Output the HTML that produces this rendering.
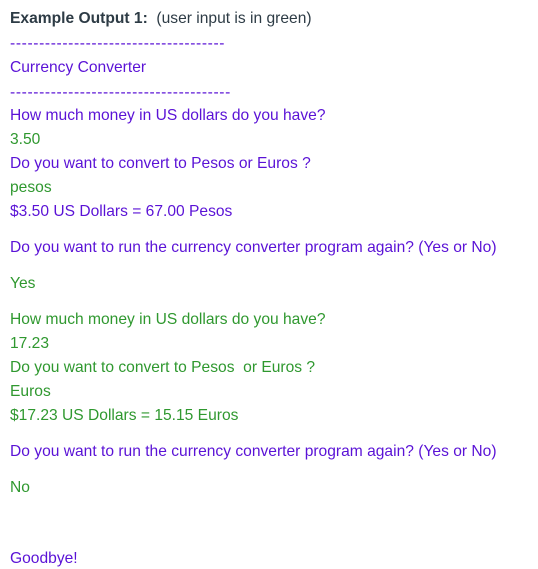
<!DOCTYPE html>
<html><head><meta charset="utf-8"><style>
body{margin:0;width:538px;height:567px;background:#fff;position:relative;overflow:hidden;font-family:"Liberation Sans",sans-serif;font-size:15.6px;}
div{position:absolute;left:10px;white-space:nowrap;line-height:20px;}
.p{color:#5a12d6}.g{color:#2f982f}
.h{color:#2d3b45}
.d{letter-spacing:0.62px}
</style></head><body>
<div class="h" style="top:9px"><b>Example Output 1:</b>&nbsp; (user input is in green)</div>
<div class="p d" style="top:34px">-------------------------------------</div>
<div class="p" style="top:58px">Currency Converter</div>
<div class="p d" style="top:83px">--------------------------------------</div>
<div class="p" style="top:106px">How much money in US dollars do you have?</div>
<div class="g" style="top:130px">3.50</div>
<div class="p" style="top:154px">Do you want to convert to Pesos or Euros ?</div>
<div class="g" style="top:178px">pesos</div>
<div class="p" style="top:202px">$3.50 US Dollars = 67.00 Pesos</div>
<div class="p" style="top:238px">Do you want to run the currency converter program again? (Yes or No)</div>
<div class="g" style="top:274px">Yes</div>
<div class="g" style="top:310px">How much money in US dollars do you have?</div>
<div class="g" style="top:334px">17.23</div>
<div class="g" style="top:358px">Do you want to convert to Pesos&nbsp; or Euros ?</div>
<div class="g" style="top:382px">Euros</div>
<div class="g" style="top:406px">$17.23 US Dollars = 15.15 Euros</div>
<div class="p" style="top:442px">Do you want to run the currency converter program again? (Yes or No)</div>
<div class="g" style="top:478px">No</div>
<div class="p" style="top:549px">Goodbye!</div>
</body></html>
